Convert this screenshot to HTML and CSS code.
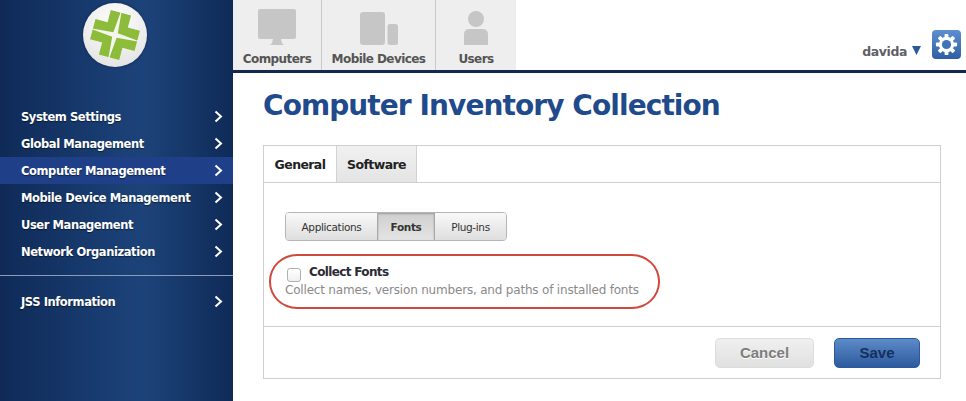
FILE: index.html
```html
<!DOCTYPE html>
<html lang="en">
<head>
<meta charset="utf-8">
<title>Computer Inventory Collection</title>
<link rel="stylesheet" href="styles.css">
</head>
<body>
<div class="app">
  <aside class="sidebar">
    <div class="logo-wrap">
      <div class="logo">
        <svg viewBox="0 0 64 64" width="64" height="64">
          <defs><radialGradient id="lg" cx="50%" cy="30%" r="75%"><stop offset="0" stop-color="#fff"/><stop offset="1" stop-color="#e2e2e2"/></radialGradient></defs>
          <circle cx="32" cy="32" r="32" fill="url(#lg)"/>
          <g transform="rotate(15 32 32)">
            <path fill="#8dbb3a" d="M21.500 9H42.500V21.500H55V42.500H42.500V55H21.500V42.500H9V21.500H21.500Z"/>
            <path fill="#f4f6ee" d="M31.700 7H32.300L34.300 29.700L57 31.700V32.300L34.300 34.300L32.300 57H31.700L29.700 34.300L7 32.300V31.700L29.700 29.700Z"/>
          </g>
        </svg>
      </div>
    </div>
    <nav class="nav">
      <a class="nav-item"><span>System Settings</span><svg class="chev" viewBox="0 0 9 13"><path d="M1.5 1.5L7 6.5L1.5 11.5"/></svg></a>
      <a class="nav-item"><span>Global Management</span><svg class="chev" viewBox="0 0 9 13"><path d="M1.5 1.5L7 6.5L1.5 11.5"/></svg></a>
      <a class="nav-item active"><span>Computer Management</span><svg class="chev" viewBox="0 0 9 13"><path d="M1.5 1.5L7 6.5L1.5 11.5"/></svg></a>
      <a class="nav-item"><span>Mobile Device Management</span><svg class="chev" viewBox="0 0 9 13"><path d="M1.5 1.5L7 6.5L1.5 11.5"/></svg></a>
      <a class="nav-item"><span>User Management</span><svg class="chev" viewBox="0 0 9 13"><path d="M1.5 1.5L7 6.5L1.5 11.5"/></svg></a>
      <a class="nav-item"><span>Network Organization</span><svg class="chev" viewBox="0 0 9 13"><path d="M1.5 1.5L7 6.5L1.5 11.5"/></svg></a>
    </nav>
    <div class="nav-rule"></div>
    <nav class="nav">
      <a class="nav-item"><span>JSS Information</span><svg class="chev" viewBox="0 0 9 13"><path d="M1.5 1.5L7 6.5L1.5 11.5"/></svg></a>
    </nav>
  </aside>
  <main class="main">
    <header class="topbar">
      <div class="apps">
        <a class="app-tab tab-computers">
          <svg viewBox="0 0 40 38" width="40" height="38"><path fill="#c6c6c6" d="M3 1H37Q39 1 39 3V29Q39 31 37 31H3Q1 31 1 29V3Q1 1 3 1Z"/><path fill="#c6c6c6" d="M16 31H24L25 35L27 37H13L15 35Z"/></svg>
          <span>Computers</span>
        </a>
        <a class="app-tab tab-mobile">
          <svg viewBox="0 0 40 38" width="40" height="38"><rect x="1" y="4" width="25" height="33" rx="3" fill="#c6c6c6"/><rect x="28.500" y="16" width="10.500" height="21" rx="2.500" fill="#c6c6c6"/></svg>
          <span>Mobile Devices</span>
        </a>
        <a class="app-tab tab-users">
          <svg viewBox="0 0 26 38" width="26" height="38"><circle cx="13" cy="11" r="8" fill="#c6c6c6"/><path fill="#c6c6c6" d="M1 37V26.500Q1 21 6.500 21H19.500Q25 21 25 26.500V37Z"/></svg>
          <span>Users</span>
        </a>
      </div>
      <div class="user">
        <span class="user-name">davida</span>
        <svg class="caret" viewBox="0 0 9 9" width="9" height="9"><path d="M0 0H9L4.500 9Z" fill="#2a5a9a"/></svg>
        <a class="gear">
          <svg viewBox="0 0 24 24" width="23" height="23">
            <g fill="#fff"><circle cx="12" cy="12" r="8"/>
              <rect x="10" y="1" width="4" height="22" rx="0.800"/>
              <rect x="10" y="1" width="4" height="22" rx="0.800" transform="rotate(45 12 12)"/>
              <rect x="10" y="1" width="4" height="22" rx="0.800" transform="rotate(90 12 12)"/>
              <rect x="10" y="1" width="4" height="22" rx="0.800" transform="rotate(135 12 12)"/>
            </g>
            <circle cx="12" cy="12" r="4.800" fill="#3f74b8"/>
          </svg>
        </a>
      </div>
    </header>
    <div class="content">
      <h1 class="title">Computer Inventory Collection</h1>
      <section class="panel">
        <div class="tabs">
          <a class="tab current">General</a>
          <a class="tab">Software</a>
        </div>
        <div class="panel-body">
          <div class="segments">
            <a class="seg">Applications</a>
            <a class="seg on">Fonts</a>
            <a class="seg">Plug-ins</a>
          </div>
          <div class="field">
            <label class="check-row"><span class="checkbox"></span><span class="check-label">Collect Fonts</span></label>
            <p class="hint">Collect names, version numbers, and paths of installed fonts</p>
            <div class="oval"></div>
          </div>
        </div>
        <div class="actions">
          <a class="btn cancel">Cancel</a>
          <a class="btn save">Save</a>
        </div>
      </section>
    </div>
  </main>
</div>
</body>
</html>
```
FILE: styles.css
```css
* { box-sizing: border-box; }
html, body { margin: 0; height: 100%; }
body { background: #fff; font-family: "DejaVu Sans", sans-serif; overflow: hidden; }
.app { display: flex; width: 966px; height: 401px; }

.sidebar {
  width: 233px; flex: none; color: #fff;
  background: linear-gradient(90deg, #0f2a57 0%, #1a3f75 50%, #1c4379 62%, #0f2a57 100%);
}
.logo-wrap { display: flex; justify-content: center; padding-top: 3px; height: 103px; }
.logo { width: 64px; height: 64px; margin-left: -3px; border-radius: 50%; box-shadow: 0 0 3px rgba(0,0,0,.4); }
.logo svg { display: block; }
.nav { display: flex; flex-direction: column; }
.nav-item {
  display: flex; align-items: center; justify-content: space-between;
  height: 27px; padding: 0 10px 0 21px;
  font-size: 11.500px; font-weight: bold; letter-spacing: -0.42px;
  text-shadow: 0 1px 1px rgba(0,0,0,.5);
}
.nav-item.active { background: #1f4088; }
.chev { width: 9px; height: 13px; fill: none; stroke: #fff; stroke-width: 2; }
.nav-rule { height: 1px; background: #8b9cb8; margin: 10px 0 12px; }

.main { flex: 1; min-width: 0; display: flex; flex-direction: column; }
.topbar {
  height: 73px; flex: none; display: flex; justify-content: space-between;
  border-bottom: 3px solid #14294f;
}
.apps { display: flex; background: #eeeeee; }
.app-tab {
  display: flex; flex-direction: column; align-items: center; justify-content: space-between;
  padding: 8px 0 4px; border-right: 1px solid #c8c8c8;
  font-size: 12px; font-weight: bold; letter-spacing: -0.57px; color: #555;
}
.app-tab svg { display: block; }
.tab-computers { width: 89px; }
.tab-mobile { width: 114px; }
.tab-users { width: 80px; border-right: 0; }
.user { display: flex; align-items: flex-end; padding: 0 5px 11px 0; }
.user-name { font-size: 12.500px; line-height: 15px; font-weight: bold; color: #5f5f66; letter-spacing: -0.4px; }
.caret { margin: 0 11px 4px 5px; }
.gear {
  width: 29px; height: 29px; border-radius: 4px; display: flex; align-items: center; justify-content: center;
  background: linear-gradient(#5d8fcf, #2e5fa6);
}

.content { padding: 15px 25px 0 30px; }
.title { margin: 0 0 22px; height: 35px; font-size: 28px; line-height: 35px; font-weight: bold; color: #1f4a8c; letter-spacing: -0.92px; }
.panel { border: 1px solid #cfcfcf; height: 234px; display: flex; flex-direction: column; }
.tabs { display: flex; height: 37px; flex: none; border-bottom: 1px solid #cfcfcf; }
.tab {
  display: flex; align-items: center; justify-content: center;
  font-size: 12.500px; font-weight: bold; color: #222; letter-spacing: -0.6px;
  width: 80px; height: 36px; background: linear-gradient(#f1f1f1, #e4e4e4);
  border-right: 1px solid #d2d2d2;
}
.tab.current { width: 73px; background: #fff; }
.panel-body { flex: 1; padding: 29px 21px 0; }
.segments { display: inline-flex; height: 29px; border: 1px solid #b5b5b5; border-radius: 4px; overflow: hidden; vertical-align: top; }
.seg {
  display: flex; align-items: center; justify-content: center; padding-top: 1px;
  font-size: 10.500px; color: #333; letter-spacing: -0.35px;
  background: linear-gradient(#f9f9f9, #dedede); height: 100%;
}
.seg:nth-child(1) { width: 91px; }
.seg:nth-child(2) { width: 58px; }
.seg:nth-child(3) { width: 71px; }
.seg.on { font-weight: bold; background: linear-gradient(#cfcfcf, #e4e4e4); border-left: 1px solid #a8a8a8; border-right: 1px solid #a8a8a8; box-shadow: inset 0 1px 2px rgba(0,0,0,.25); }
.field { position: relative; margin-top: 23px; }
.check-row { display: flex; align-items: center; height: 16px; padding-left: 2px; }
.checkbox { width: 14px; height: 14px; margin-top: 5px; border: 1px solid #b0b0b0; border-radius: 3px; background: linear-gradient(#fff, #f0f0f0); flex: none; }
.check-label { margin-left: 8px; font-size: 12px; font-weight: bold; color: #2b2b33; letter-spacing: -0.65px; }
.hint { margin: 2px 0 0; font-size: 12px; line-height: 16px; color: #8a8a8a; letter-spacing: -0.19px; }
.oval { position: absolute; left: -16px; top: -10px; width: 391px; height: 55px; border: 2px solid #cf4a3c; border-radius: 28px / 27px; }
.actions { height: 52px; flex: none; border-top: 1px solid #cfcfcf; display: flex; justify-content: flex-end; align-items: center; gap: 20px; padding: 0 20px 0 0; }
.btn { height: 30px; border-radius: 5px; display: flex; align-items: center; justify-content: center; font-family: "Liberation Sans", sans-serif; font-size: 15px; font-weight: bold; }
.cancel { width: 99px; color: #7d7d7d; background: linear-gradient(#f0f0f0, #e0e0e0); border: 1px solid #dcdcdc; text-shadow: 0 1px 0 #fff; }
.save { width: 86px; color: #14305f; background: linear-gradient(#5d8bc8, #2d5a9e); border: 1px solid #2d5a9e; }
```
